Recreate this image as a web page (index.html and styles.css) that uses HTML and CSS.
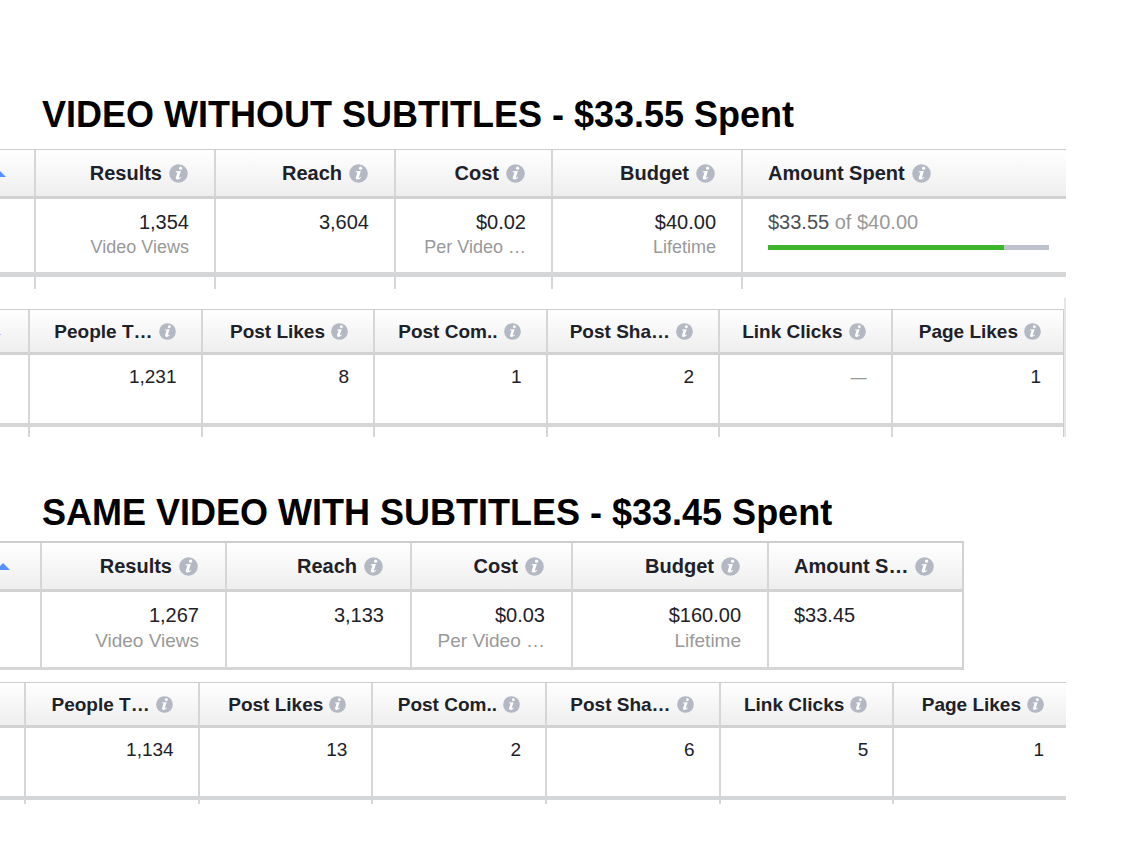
FILE: index.html
```
<!DOCTYPE html>
<html lang="en">
<head>
    <meta charset="UTF-8">
    <meta name="viewport" content="width=device-width, initial-scale=1.0">
    <title>Video Ads Results</title>
    <link rel="stylesheet" href="styles.css">
</head>
<body>
    <svg class="symbols" aria-hidden="true">
        <symbol id="info" viewBox="0 0 19 19">
            <circle cx="9.500" cy="9.500" r="9.300" fill="#b3b8c3"/>
            <circle cx="11.600" cy="4.200" r="1.600" fill="#fff"/>
            <path d="M6.800 7.300L11.900 6.900L9.900 13.200Q9.800 14.300 12 12.900L12.300 13.400Q10 15.800 8 15.600Q6.300 15.300 6.800 13.400L8.500 8.500L6.700 8.200Z" fill="#fff"/>
        </symbol>
    </svg>

    <main class="report">
        <section class="without">
            <h1>VIDEO WITHOUT SUBTITLES - $33.55 Spent</h1>
            <table class="stats cost-table">
                <colgroup>
                    <col class="w35"><col class="w180"><col class="w180"><col class="w157"><col class="w190"><col>
                </colgroup>
                <thead>
                    <tr>
                        <th class="sort"><svg width="6" height="7" viewBox="8 0 6 7"><path d="M0 7L7 0L14 7Z"/></svg></th>
                        <th><div class="head">Results <button aria-label="About Results"><svg><use href="#info"/></svg></button></div></th>
                        <th><div class="head">Reach <button aria-label="About Reach"><svg><use href="#info"/></svg></button></div></th>
                        <th><div class="head">Cost <button aria-label="About Cost"><svg><use href="#info"/></svg></button></div></th>
                        <th><div class="head">Budget <button aria-label="About Budget"><svg><use href="#info"/></svg></button></div></th>
                        <th class="amount"><div class="head">Amount Spent <button aria-label="About Amount Spent"><svg><use href="#info"/></svg></button></div></th>
                    </tr>
                </thead>
                <tbody>
                    <tr>
                        <td></td>
                        <td>1,354<small>Video Views</small></td>
                        <td>3,604</td>
                        <td>$0.02<small>Per Video …</small></td>
                        <td>$40.00<small>Lifetime</small></td>
                        <td class="amount"><span class="spent">$33.55</span> <span class="muted">of $40.00</span><progress value="33.55" max="40" aria-label="Budget spent"></progress></td>
                    </tr>
                    <tr class="next"><td></td><td></td><td></td><td></td><td></td><td></td></tr>
                </tbody>
            </table>

            <div class="edge">
                <table class="stats action-table">
                    <colgroup>
                        <col class="w28"><col><col><col><col><col><col>
                    </colgroup>
                    <thead>
                        <tr>
                            <th class="sort"><svg width="1" height="7" viewBox="13 0 1 7"><path d="M0 7L7 0L14 7Z"/></svg></th>
                            <th><div class="head">People T… <button aria-label="About People Taking Action"><svg><use href="#info"/></svg></button></div></th>
                            <th><div class="head">Post Likes <button aria-label="About Post Likes"><svg><use href="#info"/></svg></button></div></th>
                            <th><div class="head">Post Com.. <button aria-label="About Post Comments"><svg><use href="#info"/></svg></button></div></th>
                            <th><div class="head">Post Sha… <button aria-label="About Post Shares"><svg><use href="#info"/></svg></button></div></th>
                            <th><div class="head">Link Clicks <button aria-label="About Link Clicks"><svg><use href="#info"/></svg></button></div></th>
                            <th><div class="head">Page Likes <button aria-label="About Page Likes"><svg><use href="#info"/></svg></button></div></th>
                        </tr>
                    </thead>
                    <tbody>
                        <tr>
                            <td></td>
                            <td>1,231</td>
                            <td>8</td>
                            <td>1</td>
                            <td>2</td>
                            <td><span class="muted none">—</span></td>
                            <td>1</td>
                        </tr>
                        <tr class="next"><td></td><td></td><td></td><td></td><td></td><td></td><td></td></tr>
                    </tbody>
                </table>
            </div>
        </section>

        <section class="with">
            <h1>SAME VIDEO WITH SUBTITLES - $33.45 Spent</h1>
            <table class="stats cost-table closed">
                <colgroup>
                    <col class="w40"><col class="w185"><col class="w185"><col class="w161"><col class="w195"><col>
                </colgroup>
                <thead>
                    <tr>
                        <th class="sort"><svg width="10" height="7" viewBox="4 0 10 7"><path d="M0 7L7 0L14 7Z"/></svg></th>
                        <th><div class="head">Results <button aria-label="About Results"><svg><use href="#info"/></svg></button></div></th>
                        <th><div class="head">Reach <button aria-label="About Reach"><svg><use href="#info"/></svg></button></div></th>
                        <th><div class="head">Cost <button aria-label="About Cost"><svg><use href="#info"/></svg></button></div></th>
                        <th><div class="head">Budget <button aria-label="About Budget"><svg><use href="#info"/></svg></button></div></th>
                        <th class="amount"><div class="head">Amount S… <button aria-label="About Amount Spent"><svg><use href="#info"/></svg></button></div></th>
                    </tr>
                </thead>
                <tbody>
                    <tr>
                        <td></td>
                        <td>1,267<small>Video Views</small></td>
                        <td>3,133</td>
                        <td>$0.03<small>Per Video …</small></td>
                        <td>$160.00<small>Lifetime</small></td>
                        <td class="amount">$33.45</td>
                    </tr>
                </tbody>
            </table>

            <table class="stats action-table">
                <colgroup>
                    <col class="w24"><col><col><col><col><col><col>
                </colgroup>
                <thead>
                    <tr>
                        <th class="sort"></th>
                        <th><div class="head">People T… <button aria-label="About People Taking Action"><svg><use href="#info"/></svg></button></div></th>
                        <th><div class="head">Post Likes <button aria-label="About Post Likes"><svg><use href="#info"/></svg></button></div></th>
                        <th><div class="head">Post Com.. <button aria-label="About Post Comments"><svg><use href="#info"/></svg></button></div></th>
                        <th><div class="head">Post Sha… <button aria-label="About Post Shares"><svg><use href="#info"/></svg></button></div></th>
                        <th><div class="head">Link Clicks <button aria-label="About Link Clicks"><svg><use href="#info"/></svg></button></div></th>
                        <th><div class="head">Page Likes <button aria-label="About Page Likes"><svg><use href="#info"/></svg></button></div></th>
                    </tr>
                </thead>
                <tbody>
                    <tr>
                        <td></td>
                        <td>1,134</td>
                        <td>13</td>
                        <td>2</td>
                        <td>6</td>
                        <td>5</td>
                        <td>1</td>
                    </tr>
                    <tr class="next"><td></td><td></td><td></td><td></td><td></td><td></td><td></td></tr>
                </tbody>
            </table>
        </section>
    </main>
</body>
</html>
```
FILE: styles.css
```
* {
    box-sizing: border-box;
}

body {
    margin: 0;
    background: #fff;
    color: #1d2129;
    font-family: "Liberation Sans", Arial, sans-serif;
}

.symbols {
    display: none;
}

.report {
    padding: 93px 56px 40px 0;
}

h1 {
    margin: 0 0 12px 42px;
    font-size: 36px;
    line-height: 44px;
    color: #000;
}

.with {
    margin-top: 54px;
}

.with h1 {
    margin-bottom: 6px;
}

/* Tables */
.stats {
    width: 100%;
    table-layout: fixed;
    border-collapse: separate;
    border-spacing: 0;
    border-top: 1px solid #cecece;
    font-size: 20px;
    line-height: 25px;
    text-align: right;
}

.stats th, .stats td {
    padding: 0 26px 0 0;
    border-left: 2px solid #d6d6d6;
}

.stats th:first-child, .stats td:first-child {
    padding: 0;
    border-left: none;
}

.stats th {
    height: 49px;
    border-bottom: 3px solid #d2d2d2;
    background: linear-gradient(#fff, #eee);
    white-space: nowrap;
}

.stats td {
    height: 78px;
    padding-top: 11px;
    padding-right: 25px;
    border-bottom: 5px solid #d5d6d8;
    vertical-align: top;
}

.stats .next td {
    height: 12px;
    padding: 0;
    border-bottom: none;
}

.stats .amount {
    padding-left: 25px;
    padding-right: 17px;
    text-align: left;
}

.head {
    display: flex;
    align-items: center;
    justify-content: flex-end;
    gap: 7px;
}

.amount .head {
    justify-content: flex-start;
}

.head button {
    display: block;
    padding: 0;
    border: none;
    background: none;
    cursor: pointer;
}

.head svg {
    display: block;
    width: 19px;
    height: 19px;
}

.sort svg {
    display: block;
    fill: #5890ff;
}

small {
    display: block;
    font-size: 18px;
    color: #999;
}

.muted {
    color: #999;
}

.spent {
    color: #4b4f56;
}

progress {
    display: block;
    width: 100%;
    height: 5px;
    margin: 10px 0;
    border: none;
    appearance: none;
    -webkit-appearance: none;
}

progress::-webkit-progress-bar {
    background: #bdc2cc;
}

progress::-webkit-progress-value {
    background: #3fb52b;
}

/* Post actions */
.action-table {
    font-size: 19px;
}

.action-table th {
    height: 45px;
    padding-right: 25px;
}

.action-table td {
    height: 72px;
    padding-top: 9px;
    padding-right: 24px;
    border-bottom-width: 4px;
}

.action-table .next td {
    height: 10px;
}

.action-table th:last-child, .action-table td:last-child {
    padding-right: 22px;
}

.action-table .head {
    gap: 6px;
}

.action-table .head svg {
    width: 17px;
    height: 17px;
}

.none {
    font-size: 16px;
}

.edge {
    margin-top: 9px;
    padding-top: 11px;
    border-right: 2px solid #e5e6e8;
}

.edge .stats {
    border-right: 1px solid #cecece;
}

/* Table with its right side showing */
.closed {
    width: 90.4%;
    margin-bottom: 12px;
    border-top-width: 2px;
    border-right: 2px solid #d2d2d2;
}

.closed th {
    padding-right: 27px;
}

.closed td {
    padding-right: 26px;
    border-bottom-width: 3px;
}

.closed small {
    font-size: 19px;
}

.with .action-table .next td {
    height: 4px;
}

/* Column widths */
.w24 { width: 24px; }
.w28 { width: 28px; }
.w35 { width: 34px; }
.w40 { width: 40px; }
.w157 { width: 157px; }
.w161 { width: 161px; }
.w180 { width: 180px; }
.w185 { width: 185px; }
.w190 { width: 190px; }
.w195 { width: 196px; }
```
